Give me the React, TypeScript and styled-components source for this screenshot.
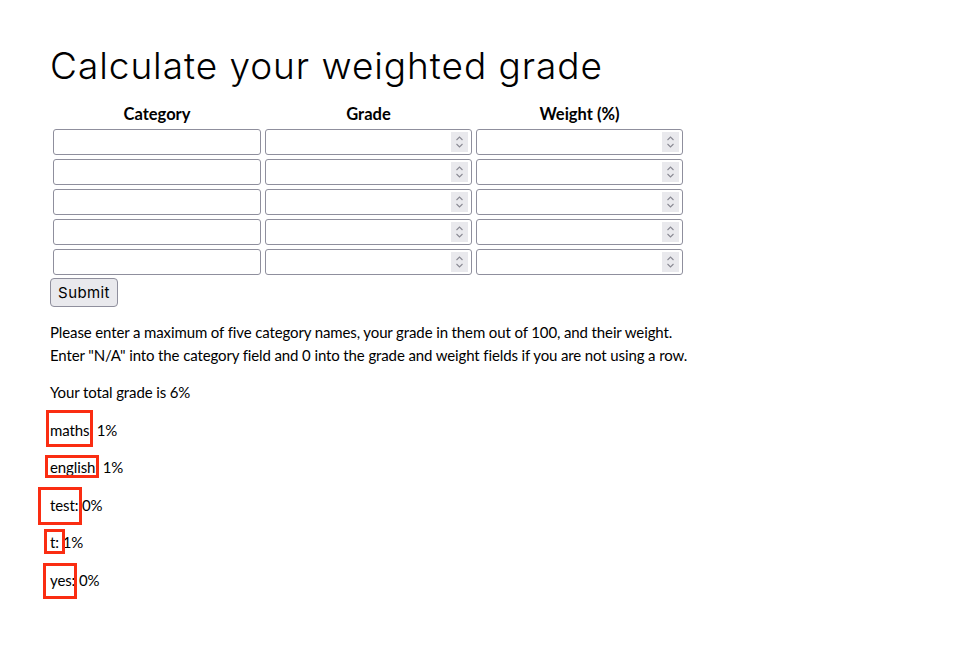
import React, { useState } from "react";
import styled, { createGlobalStyle } from "styled-components";

interface Mark {
  x: number;
  y: number;
  w: number;
  h: number;
}

interface Result {
  name: string;
  value: string;
  mark: Mark;
}

// results from the last submit, with the review boxes drawn over them
const results: Result[] = [
  { name: "maths", value: "1%", mark: { x: -4, y: -9, w: 47, h: 37 } },
  { name: "english", value: "1%", mark: { x: -5, y: -1, w: 54, h: 23 } },
  { name: "test", value: "0%", mark: { x: -12, y: -7, w: 44, h: 38 } },
  { name: "t", value: "1%", mark: { x: -6, y: -2, w: 21, h: 25 } },
  { name: "yes", value: "0%", mark: { x: -7, y: -6, w: 34, h: 36 } },
];

const ROWS = 5;

/**
 * Spinner drawn on the number fields
 */
const Spinner = () => (
  <StyledSpinner>
    <svg width="17" height="20" viewBox="0 0 17 20">
      <path
        d="M5.5 8 L8.5 5 L11.5 8"
        fill="none"
        stroke="#8a8a94"
        strokeWidth="1.1"
      />
      <path
        d="M5.5 12 L8.5 15 L11.5 12"
        fill="none"
        stroke="#8a8a94"
        strokeWidth="1.1"
      />
    </svg>
  </StyledSpinner>
);

const NumberField = () => (
  <StyledFieldWrap>
    <StyledInput type="number" />
    <Spinner />
  </StyledFieldWrap>
);

const App = () => {
  const [submitted] = useState<boolean>(true);

  return (
    <>
      <GlobalStyle />
      <StyledPage>
        <StyledTitle>Calculate your weighted grade</StyledTitle>

        {/* Start grade form */}
        <StyledTable>
          <thead>
            <tr>
              <StyledHead>Category</StyledHead>
              <StyledHead>Grade</StyledHead>
              <StyledHead>Weight (%)</StyledHead>
            </tr>
          </thead>
          <tbody>
            {Array.from({ length: ROWS }).map((_, i) => (
              <tr key={i}>
                <StyledCell>
                  <StyledInput type="text" />
                </StyledCell>
                <StyledCell>
                  <NumberField />
                </StyledCell>
                <StyledCell>
                  <NumberField />
                </StyledCell>
              </tr>
            ))}
          </tbody>
        </StyledTable>
        <StyledSubmit type="button">Submit</StyledSubmit>
        {/* End grade form */}

        <StyledText $gap={14}>
          Please enter a maximum of five category names, your grade in them out
          of 100, and their weight.
          <br />
          Enter "N/A" into the category field and 0 into the grade and weight
          fields if you are not using a row.
        </StyledText>

        {submitted && (
          <>
            <StyledText $gap={15}>Your total grade is 6%</StyledText>
            {results.map((r) => (
              <StyledResult key={r.name}>
                {r.name}: {r.value}
                <StyledMark
                  $x={r.mark.x}
                  $y={r.mark.y}
                  $w={r.mark.w}
                  $h={r.mark.h}
                />
              </StyledResult>
            ))}
          </>
        )}
      </StyledPage>
    </>
  );
};

export default App;

// ========= Start Styled Elements ==========
const GlobalStyle = createGlobalStyle`
  html, body {
    margin: 0;
    background: #ffffff;
    color: #000000;
  }
  body {
    font-family: Lato, "Liberation Sans", sans-serif;
    font-size: 15px;
    line-height: 1.5;
  }
`;

const StyledPage = styled.div`
  padding: 0 50px 50px;
  display: flex;
  flex-direction: column;
  align-items: flex-start;
`;

const StyledTitle = styled.h1`
  font-family: Inter, "Open Sans", sans-serif;
  font-weight: 300;
  font-size: 37px;
  line-height: 48px;
  margin: 42px 0 10px;
  letter-spacing: 0.95px;
`;

const StyledTable = styled.table`
  border-spacing: 2px;
`;

const StyledHead = styled.th`
  padding: 1px;
  font-weight: 700;
  font-size: 16.5px;
  line-height: 22px;
  text-align: center;
`;

const StyledCell = styled.td`
  padding: 1px;
`;

const StyledFieldWrap = styled.div`
  position: relative;
  width: 207px;
  height: 26px;
`;

const StyledInput = styled.input`
  display: block;
  box-sizing: border-box;
  width: 207px;
  height: 26px;
  margin: 0;
  padding: 2px 4px;
  border: 1px solid #8f8f9d;
  border-radius: 3px;
  background: #ffffff;
  font-family: Lato, sans-serif;
  font-size: 15px;
  appearance: textfield;

  &[type="text"] {
    width: 208px;
  }

  &::-webkit-inner-spin-button,
  &::-webkit-outer-spin-button {
    -webkit-appearance: none;
    margin: 0;
  }
`;

const StyledSpinner = styled.div`
  position: absolute;
  top: 3px;
  right: 4px;
  width: 17px;
  height: 20px;
  background: #e9e9ed;
  display: flex;
  pointer-events: none;
`;

const StyledSubmit = styled.button`
  box-sizing: border-box;
  width: 68px;
  height: 29px;
  padding: 0;
  font-family: Inter, "Open Sans", sans-serif;
  font-size: 15px;
  letter-spacing: 0.4px;
  color: #000000;
  background: #e9e9ed;
  border: 1px solid #8f8f9d;
  border-radius: 4px;
`;

const StyledText = styled.p<{ $gap: number }>`
  margin: ${(p) => p.$gap}px 0 0;
  letter-spacing: -0.12px;
`;

const StyledResult = styled.p`
  position: relative;
  margin: 15px 0 0;
  letter-spacing: -0.12px;
`;

const StyledMark = styled.span<{ $x: number; $y: number; $w: number; $h: number }>`
  position: absolute;
  left: ${(p) => p.$x}px;
  top: ${(p) => p.$y}px;
  width: ${(p) => p.$w}px;
  height: ${(p) => p.$h}px;
  box-sizing: border-box;
  border: 3px solid #fa2d12;
  pointer-events: none;
`;
// ========= End Styled Elements ==========
